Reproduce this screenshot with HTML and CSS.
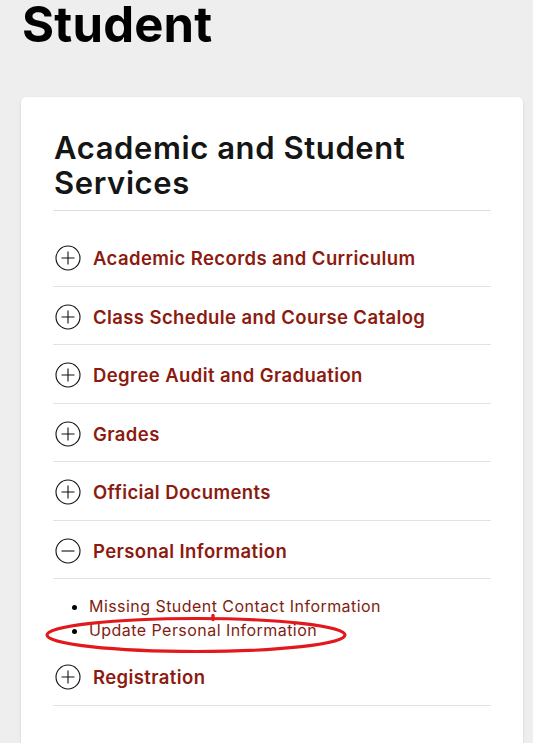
FILE: index.html
```html
<!DOCTYPE html>
<html lang="en">
<head>
<meta charset="utf-8">
<title>Student</title>
<link rel="stylesheet" href="styles.css">
</head>
<body>
<div class="page">
  <h1 class="page-title">Student</h1>
  <section class="card">
    <h2 class="card-title">Academic and Student Services</h2>
    <div class="accordion">
      <div class="row">
        <svg class="toggle" viewBox="0 0 26 26" width="26" height="26"><circle cx="13" cy="13" r="12" fill="none" stroke="#111" stroke-width="1.1"/><path d="M6.5 13h13M13 6.5v13" stroke="#111" stroke-width="1.1"/></svg>
        <span class="label">Academic Records and Curriculum</span>
      </div>
      <div class="row">
        <svg class="toggle" viewBox="0 0 26 26" width="26" height="26"><circle cx="13" cy="13" r="12" fill="none" stroke="#111" stroke-width="1.1"/><path d="M6.5 13h13M13 6.5v13" stroke="#111" stroke-width="1.1"/></svg>
        <span class="label">Class Schedule and Course Catalog</span>
      </div>
      <div class="row">
        <svg class="toggle" viewBox="0 0 26 26" width="26" height="26"><circle cx="13" cy="13" r="12" fill="none" stroke="#111" stroke-width="1.1"/><path d="M6.5 13h13M13 6.5v13" stroke="#111" stroke-width="1.1"/></svg>
        <span class="label">Degree Audit and Graduation</span>
      </div>
      <div class="row">
        <svg class="toggle" viewBox="0 0 26 26" width="26" height="26"><circle cx="13" cy="13" r="12" fill="none" stroke="#111" stroke-width="1.1"/><path d="M6.5 13h13M13 6.5v13" stroke="#111" stroke-width="1.1"/></svg>
        <span class="label">Grades</span>
      </div>
      <div class="row">
        <svg class="toggle" viewBox="0 0 26 26" width="26" height="26"><circle cx="13" cy="13" r="12" fill="none" stroke="#111" stroke-width="1.1"/><path d="M6.5 13h13M13 6.5v13" stroke="#111" stroke-width="1.1"/></svg>
        <span class="label">Official Documents</span>
      </div>
      <div class="row">
        <svg class="toggle" viewBox="0 0 26 26" width="26" height="26"><circle cx="13" cy="13" r="12" fill="none" stroke="#111" stroke-width="1.1"/><path d="M6.5 13h13" stroke="#111" stroke-width="1.1"/></svg>
        <span class="label">Personal Information</span>
      </div>
      <ul class="sublist">
        <li><a href="#">Missing Student Contact Information</a></li>
        <li><a href="#">Update Personal Information</a></li>
        <svg class="annot" viewBox="0 0 304 40" width="304" height="40"><ellipse cx="151" cy="20" rx="149" ry="16.5" fill="none" stroke="#e3181d" stroke-width="3.2"/><path d="M168 4.5v-4" stroke="#e3181d" stroke-width="3.4" stroke-linecap="round"/></svg>
      </ul>
      <div class="row">
        <svg class="toggle" viewBox="0 0 26 26" width="26" height="26"><circle cx="13" cy="13" r="12" fill="none" stroke="#111" stroke-width="1.1"/><path d="M6.5 13h13M13 6.5v13" stroke="#111" stroke-width="1.1"/></svg>
        <span class="label">Registration</span>
      </div>
    </div>
  </section>
</div>
</body>
</html>
```

FILE: styles.css
```css
html, body {
  margin: 0;
  padding: 0;
  background: #eeeeee;
}

body {
  font-family: Inter, "Noto Sans", sans-serif;
  color: #111;
}

.page {
  padding: 0 10px 0 21px;
}

.page-title {
  margin: 1px 0 48px 1px;
  font-size: 49px;
  line-height: 48px;
  font-weight: 700;
  letter-spacing: 0.2px;
  color: #000;
}

.card {
  background: #fff;
  border-radius: 5px;
  box-shadow: 0 1px 3px rgba(0, 0, 0, 0.13);
  padding: 32px 32px 60px 32px;
  width: 502px;
  box-sizing: border-box;
}

.card-title {
  margin: 0;
  padding: 1px 0 10px 1px;
  font-size: 31px;
  line-height: 35px;
  font-weight: 600;
  letter-spacing: 0.6px;
  color: #151515;
  border-bottom: 1px solid #dedede;
}

.accordion {
  margin-top: 17px;
}

.row {
  display: flex;
  align-items: center;
  gap: 12px;
  height: 58.5px;
  box-sizing: border-box;
  padding: 3px 0 0 2px;
  border-bottom: 1px solid #e2e2e2;
}

.toggle {
  flex: none;
  display: block;
}

.label {
  font-size: 18.5px;
  font-weight: 600;
  letter-spacing: 0.4px;
  color: #8c1a0f;
}

.sublist {
  position: relative;
  margin: 15px 0 5px 0;
  padding: 0 0 0 36px;
  font-size: 16px;
  line-height: 24px;
}

.sublist li {
  color: #000;
}

.sublist a {
  color: #7f1d12;
  text-decoration: none;
  letter-spacing: 0.45px;
}

.annot {
  position: absolute;
  left: -8px;
  top: 21px;
  overflow: visible;
}
```
